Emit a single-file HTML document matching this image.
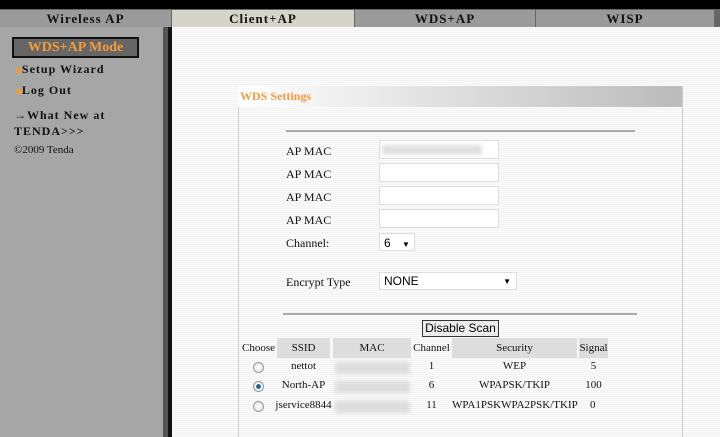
<!DOCTYPE html>
<html><head><style>
*{margin:0;padding:0;box-sizing:border-box}
body{width:720px;height:437px;overflow:hidden;background:#fff;font-family:"Liberation Serif",serif;position:relative}
.a{position:absolute}
.tab{position:absolute;top:9px;height:18px;background:#9a9a9a;font:bold 13px "Liberation Serif",serif;letter-spacing:1px;color:#111;text-align:center;line-height:18px;border-top:1px solid #666}
.lbl{position:absolute;left:286px;font-size:12px;color:#111}
.inp{position:absolute;left:379px;width:120px;height:19px;background:#fff;border:1px solid #ddd}
.th{position:absolute;top:338px;height:20px;background:#ddd;font-size:11px;text-align:center;line-height:20px;color:#111;white-space:nowrap}
.td{position:absolute;font-size:11px;text-align:center;color:#111;white-space:nowrap}
.rad{position:absolute;left:253px;width:11px;height:11px;border-radius:50%;border:1px solid #999;background:radial-gradient(#fff,#ddd)}
.blur{position:absolute;left:335px;width:75px;height:12px;background:#ccc;filter:blur(2px);opacity:.6}
.side{position:absolute;left:15px;font:bold 12px 'Liberation Serif',serif;letter-spacing:1px;color:#111}
</style></head><body>
<div class="a" style="left:0;top:0;width:720px;height:9px;background:#000"></div>
<div class="a" style="left:0;top:9px;width:720px;height:18px;background:#666"></div>
<div class="tab" style="left:0;width:171px">Wireless AP</div>
<div class="tab" style="left:172px;width:182px;background:#d4d4c8">Client+AP</div>
<div class="tab" style="left:355px;width:180px">WDS+AP</div>
<div class="tab" style="left:536px;width:178px">WISP</div>
<div class="a" style="left:0;top:27px;width:163px;height:410px;background:#a6a6a6"></div>
<div class="a" style="left:163px;top:27px;width:5px;height:410px;background:#555"></div>
<div class="a" style="left:168px;top:27px;width:4px;height:410px;background:#111"></div>
<div class="a" style="left:172px;top:27px;width:548px;height:410px;background:repeating-linear-gradient(#fafafa 0 1px,#f3f3f3 1px 2px)"></div>
<div class="a" style="left:12px;top:37px;width:127px;height:21px;background:#666;border:2px solid #111;color:#f79a3a;font:bold 14px 'Liberation Serif',serif;text-align:center;line-height:17px">WDS+AP Mode</div>
<div class="side" style="top:62px"><span style="color:#f79a3a;font-size:9px;letter-spacing:0">◆</span>Setup Wizard</div>
<div class="side" style="top:83px"><span style="color:#f79a3a;font-size:9px;letter-spacing:0">◆</span>Log Out</div>
<div class="a" style="left:14px;top:107px;font:bold 12px/16px 'Liberation Serif',serif;letter-spacing:1px;color:#111">→What New at<br>TENDA&gt;&gt;&gt;</div>
<div class="a" style="left:14px;top:144px;font-size:11px;color:#111">©2009 Tenda</div>
<div class="a" style="left:238px;top:86px;width:444px;height:21px;background:linear-gradient(90deg,#fff,#bbb)"></div>
<div class="a" style="left:240px;top:89px;color:#f79a3a;font:bold 12px 'Liberation Serif',serif">WDS Settings</div>
<div class="a" style="left:238px;top:107px;width:1px;height:330px;background:#ccc"></div>
<div class="a" style="left:682px;top:86px;width:1px;height:351px;background:#ccc"></div>
<div class="a" style="left:286px;top:130px;width:349px;height:2px;background:#aaa"></div>
<div class="lbl" style="top:144px">AP MAC</div>
<div class="lbl" style="top:167px">AP MAC</div>
<div class="lbl" style="top:190px">AP MAC</div>
<div class="lbl" style="top:213px">AP MAC</div>
<div class="lbl" style="top:236px">Channel:</div>
<div class="lbl" style="top:275px">Encrypt Type</div>
<div class="inp" style="top:140px"></div>
<div class="a" style="left:382px;top:145px;width:100px;height:10px;background:#ccc;filter:blur(2px);opacity:.6"></div>
<div class="inp" style="top:163px"></div>
<div class="inp" style="top:186px"></div>
<div class="inp" style="top:209px"></div>
<div class="a" style="left:379px;top:233px;width:36px;height:18px;background:#fff;border:1px solid #ddd;font:12px 'Liberation Sans',sans-serif;padding:2px 0 0 4px">6 <span style="font-size:8px;margin-left:8px">▼</span></div>
<div class="a" style="left:379px;top:272px;width:138px;height:18px;background:#fff;border:1px solid #ddd;font:12px 'Liberation Sans',sans-serif;padding:1px 0 0 4px">NONE<span style="font-size:8px;position:absolute;right:5px;top:4px">▼</span></div>
<div class="a" style="left:283px;top:313px;width:354px;height:2px;background:#aaa"></div>
<div class="a" style="left:422px;top:320px;width:77px;height:17px;background:#ececec;border:1px solid #333;font:12px 'Liberation Sans',sans-serif;text-align:center;line-height:15px">Disable Scan</div>
<div class="th" style="left:241px;width:35px;background:none">Choose</div>
<div class="th" style="left:277px;width:53px">SSID</div>
<div class="th" style="left:333px;width:78px">MAC</div>
<div class="th" style="left:412px;width:39px;background:none">Channel</div>
<div class="th" style="left:452px;width:125px">Security</div>
<div class="th" style="left:579px;width:29px">Signal</div>
<div class="rad" style="top:362px"></div>
<div class="rad" style="top:381px;background:radial-gradient(#1a5a9a 30%,#fff 45%,#ccc)"></div>
<div class="rad" style="top:401px"></div>
<div class="td" style="left:277px;width:53px;top:360px">nettot</div>
<div class="td" style="left:277px;width:53px;top:379px">North-AP</div>
<div class="td" style="left:273px;width:61px;top:399px">jservice8844</div>
<div class="blur" style="top:362px"></div><div class="blur" style="top:381px"></div><div class="blur" style="top:401px"></div>
<div class="td" style="left:413px;width:37px;top:360px">1</div>
<div class="td" style="left:413px;width:37px;top:379px">6</div>
<div class="td" style="left:413px;width:37px;top:399px">11</div>
<div class="td" style="left:452px;width:125px;top:360px">WEP</div>
<div class="td" style="left:452px;width:125px;top:379px">WPAPSK/TKIP</div>
<div class="td" style="left:452px;width:125px;top:399px">WPA1PSKWPA2PSK/TKIP</div>
<div class="td" style="left:579px;width:29px;top:360px">5</div>
<div class="td" style="left:579px;width:29px;top:379px">100</div>
<div class="td" style="left:590px;top:399px">0</div>
</body></html>
